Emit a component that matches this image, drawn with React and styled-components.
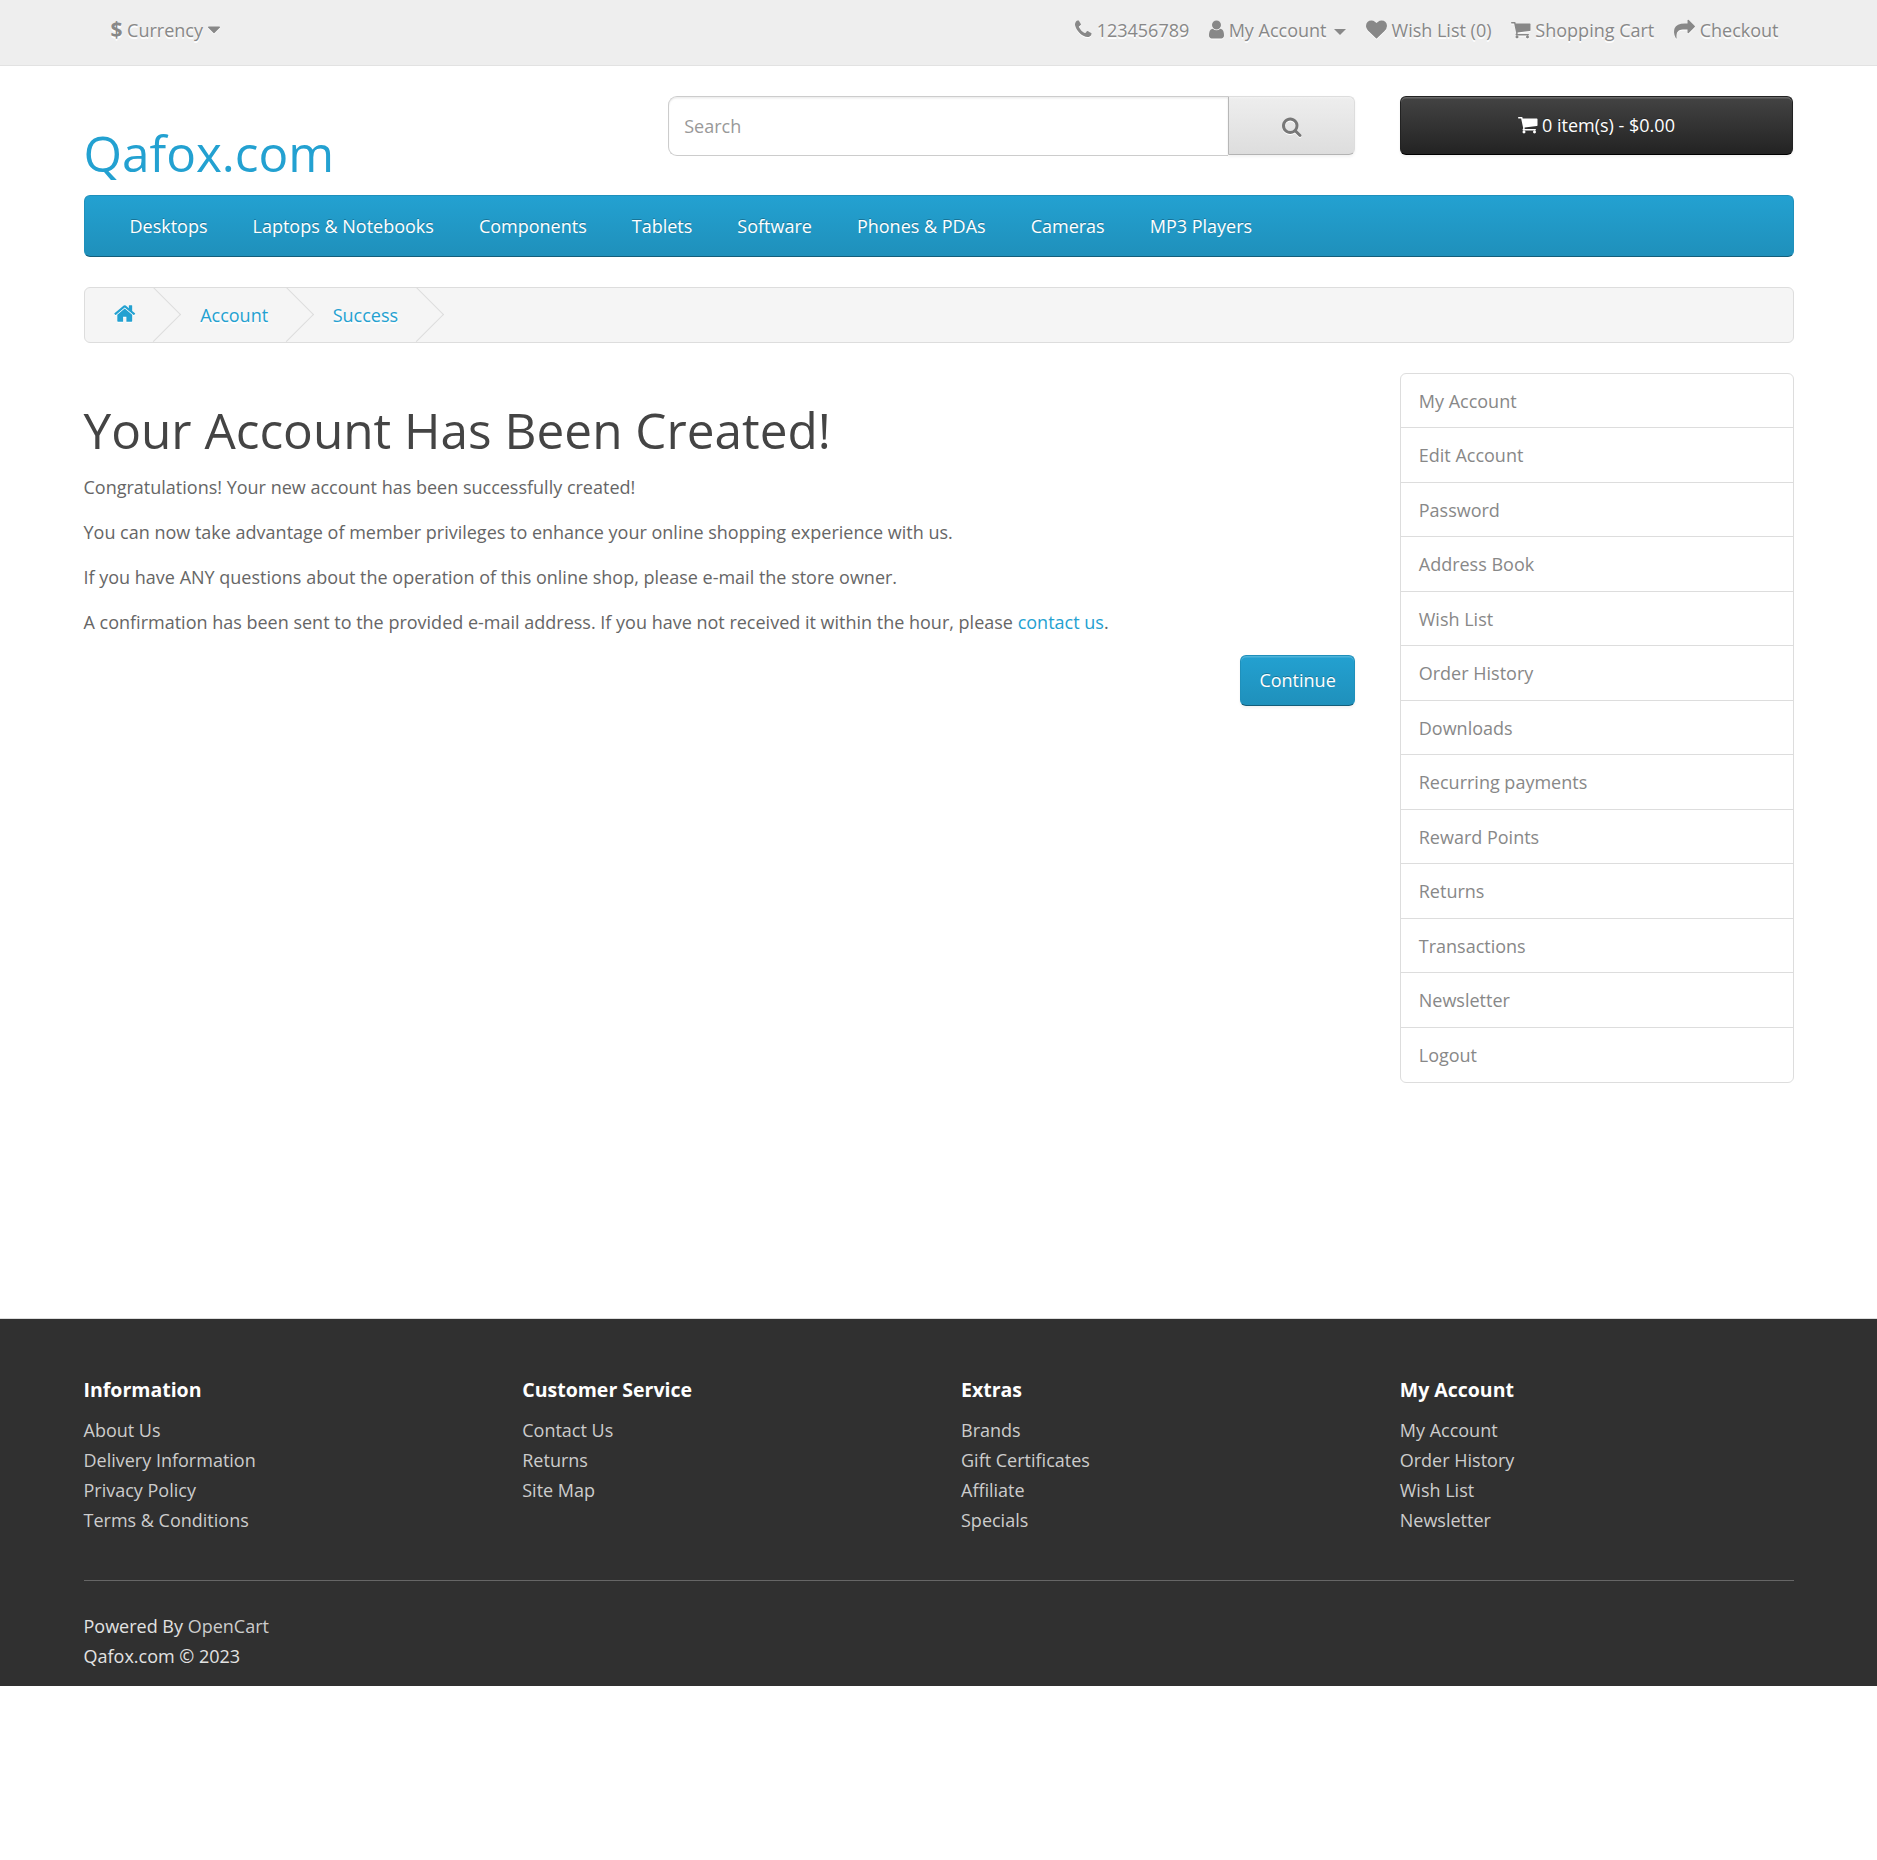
import React from "react";
import styled, { createGlobalStyle } from "styled-components";

const GlobalStyle = createGlobalStyle`
  *, *::before, *::after { box-sizing: border-box; }
  body {
    margin: 0;
    background: #fff;
    color: #666;
    font-family: "Open Sans", sans-serif;
    font-size: 18px;
    line-height: 30px;
  }
  a { color: #23a1d1; text-decoration: none; }
  h1, h5, p, ul { margin: 0; padding: 0; }
  ul { list-style: none; }
  button, input { font-family: inherit; margin: 0; }
`;

const glyphs = {
  phone: [1408, "M1600 1240q0 27-10 70.5t-21 68.5q-21 50-122 106-94 51-186 51-27 0-53-3.5t-57.5-12.5-47-14.5-55.5-20.5-49-18q-98-35-175-83-127-79-264-216t-216-264q-48-77-83-175-3-9-18-49t-20.5-55.5-14.5-47-12.5-57.5-3.5-53q0-92 51-186 56-101 106-122 25-11 68.5-21t70.5-10q14 0 21 3 18 6 53 76 11 19 30 54t35 63.5 31 53.5q3 4 17.5 25t21.5 35.5 7 28.5q0 20-28.5 50t-62 55-62 53-28.5 46q0 9 5 22.5t8.5 20.5 14 24 11.5 19q76 137 174 235t235 174q2 1 19 11.5t24 14 20.5 8.5 22.5 5q18 0 46-28.5t53-62 55-62 50-28.5q14 0 28.5 7t35.5 21.5 25 17.5q25 15 53.5 31t63.5 35 54 30q70 35 76 53 3 7 3 21z"],
  user: [1280, "M1536 1399q0 109-62.5 187t-150.5 78h-854q-88 0-150.5-78t-62.5-187q0-85 8.5-160.5t31.5-152 58.5-131 94-89 134.5-34.5q131 128 313 128t313-128q76 0 134.5 34.5t94 89 58.5 131 31.5 152 8.5 160.5zm-256-887q0 159-112.5 271.5t-271.5 112.5-271.5-112.5-112.5-271.5 112.5-271.5 271.5-112.5 271.5 112.5 112.5 271.5z"],
  heart: [1792, "M896 1664q-26 0-44-18l-624-602q-10-8-27.5-26t-55.5-65.5-68-97.5-53.5-121-23.5-138q0-220 127-344t351-124q62 0 126.5 21.5t120 58 95.5 68.5 76 68q36-36 76-68t95.5-68.5 120-58 126.5-21.5q224 0 351 124t127 344q0 221-229 450l-623 600q-18 18-44 18z"],
  cart: [1664, "M704 1536q0 52-38 90t-90 38-90-38-38-90 38-90 90-38 90 38 38 90zm896 0q0 52-38 90t-90 38-90-38-38-90 38-90 90-38 90 38 38 90zm128-1088v512q0 24-16.5 42.5t-40.5 21.5l-1044 122q13 60 13 70 0 16-24 64h920q26 0 45 19t19 45-19 45-45 19h-1024q-26 0-45-19t-19-45q0-11 8-31.5t16-36 21.5-40 15.5-29.5l-177-823h-204q-26 0-45-19t-19-45 19-45 45-19h256q16 0 28.5 6.5t19.5 15.5 13 24.5 8 26 5.5 29.5 4.5 26h1201q26 0 45 19t19 45z"],
  share: [1792, "M1792 640q0 26-19 45l-512 512q-19 19-45 19t-45-19-19-45v-256h-224q-98 0-175.5 6t-154 21.5-133 42.5-105.5 69.5-80 101-48.5 138.5-17.5 181q0 55 5 123 0 6 2.5 23.5t2.5 26.5q0 15-8.5 25t-23.5 10q-16 0-28-17-7-9-13-22t-13.5-30-10.5-24q-127-285-127-451 0-199 53-333 162-403 875-403h224v-256q0-26 19-45t45-19 45 19l512 512q19 19 19 45z"],
  search: [1664, "M1216 832q0-185-131.5-316.5t-316.5-131.5-316.5 131.5-131.5 316.5 131.5 316.5 316.5 131.5 316.5-131.5 131.5-316.5zm512 832q0 52-38 90t-90 38q-54 0-90-38l-343-342q-179 124-399 124-143 0-273.5-55.5t-225-150-150-225-55.5-273.5 55.5-273.5 150-225 225-150 273.5-55.5 273.5 55.5 225 150 150 225 55.5 273.5q0 220-124 399l343 343q37 37 37 90z"],
  home: [1664, "M1472 992v480q0 26-19 45t-45 19h-384v-384h-256v384h-384q-26 0-45-19t-19-45v-480q0-1 .5-3t.5-3l575-474 575 474q1 2 1 6zm223-69l-62 74q-8 9-21 11h-3q-13 0-21-7l-692-577-692 577q-12 8-24 7-13-2-21-11l-62-74q-8-10-7-23.5t11-21.5l719-599q32-26 76-26t76 26l244 204v-195q0-14 9-23t23-9h192q14 0 23 9t9 23v408l219 182q10 8 11 21.5t-7 23.5z"],
  caret: [1024, "M1408 704q0 26-19 45l-448 448q-19 19-45 19t-45-19l-448-448q-19-19-19-45t19-45 45-19h896q26 0 45 19t19 45z"],
};

const Glyph = styled.svg`
  display: inline-block;
  height: ${(p) => p.$size}px;
  vertical-align: ${(p) => -p.$size / 7}px;
  fill: currentColor;
  overflow: visible;
  filter: ${(p) => (p.$shadow ? `drop-shadow(${p.$shadow})` : "none")};
`;

function Icon({ name, shadow, size = 21 }) {
  const [advance, d] = glyphs[name];
  return (
    <Glyph
      $shadow={shadow}
      $size={size}
      width={(advance / 1792) * size}
      viewBox={`${(1792 - advance) / 2} 0 ${advance} 1792`}
      aria-hidden="true"
    >
      <path d={d} />
    </Glyph>
  );
}

const LIGHT = "0 1.5px 0 #fff";

const Container = styled.div`
  width: 1755px;
  margin: 0 auto;
  padding: 0 22.5px;
`;

const TopBar = styled.nav`
  height: 66px;
  margin-bottom: 30px;
  padding-top: 15px;
  background: #eee;
  border-bottom: 1px solid #e2e2e2;
`;

const TopRow = styled.div`
  display: flex;
  justify-content: space-between;
  padding: 0 15px 0 26.9px;
  color: #888;
  text-shadow: ${LIGHT};
  white-space: nowrap;
`;

const Currency = styled.div`
  strong { font-size: 21px; line-height: 21px; }
`;

const TopLinks = styled.ul`
  display: flex;
  gap: 19.7px;
  a { color: #888; }
`;

const SmallCaret = styled.span`
  display: inline-block;
  margin-left: 3px;
  vertical-align: middle;
  border-top: 6px solid;
  border-right: 6px solid transparent;
  border-left: 6px solid transparent;
`;

const HeaderRow = styled.header`
  display: grid;
  grid-template-columns: 539.75px 686.5px 393.25px;
  column-gap: 45px;
  align-items: start;
`;

const Logo = styled.h1`
  padding: 30px 0 15px;
  font-size: 49.5px;
  font-weight: 400;
  line-height: 54px;
`;

const SearchBox = styled.div`
  display: flex;
  align-items: flex-start;
`;

const SearchInput = styled.input`
  flex: 1;
  min-width: 0;
  height: 60px;
  padding: 0 15px;
  border: 1px solid #ccc;
  border-right: 0;
  border-radius: 9px 0 0 9px;
  background: #fff;
  color: #555;
  font-size: 18px;
  line-height: 30px;
  outline: 0;
  box-shadow: inset 0 1.5px 1.5px rgba(0, 0, 0, 0.075);
  &::placeholder { color: #999; opacity: 1; }
`;

const buttonTones = {
  light: `
    color: #777;
    background: linear-gradient(#eee, #ddd);
    border-color: #ddd #ddd #b3b3b3 #b7b7b7;
  `,
  dark: `
    color: #fff;
    background: linear-gradient(#444, #222);
    border-color: #222 #222 #000;
    text-shadow: 0 -1.5px 0 rgba(0, 0, 0, 0.25);
  `,
  blue: `
    color: #fff;
    background: linear-gradient(#23a1d1, #1f90bb);
    border-color: #1f90bb #1f90bb #145e7a;
    text-shadow: 0 -1.5px 0 rgba(0, 0, 0, 0.25);
  `,
};

const Button = styled.button`
  border: 1px solid;
  border-radius: ${(p) => (p.$joined ? "0 6px 6px 0" : "6px")};
  padding: ${(p) => p.$pad};
  height: ${(p) => p.$height};
  font-size: 18px;
  line-height: 27px;
  box-shadow: inset 0 1.5px 0 rgba(255, 255, 255, 0.2), 0 1.5px 3px rgba(0, 0, 0, 0.05);
  ${(p) => buttonTones[p.$tone]}
  background-clip: border-box;
  background-origin: border-box;
`;

const Menu = styled.nav`
  display: flex;
  height: 62px;
  margin-bottom: 30px;
  padding: 15px 45px;
  gap: 45px;
  border: 1px solid;
  border-color: #1f90bb #1f90bb #145e7a;
  border-radius: 6px;
  background: linear-gradient(#23a1d1, #1f90bb);
  a { color: #fff; text-shadow: 0 -1.5px 0 rgba(0, 0, 0, 0.25); }
`;

const Breadcrumb = styled.ul`
  display: flex;
  gap: 4.6px;
  height: 56px;
  margin-bottom: 30px;
  padding: 12px 0;
  border: 1px solid #ddd;
  border-radius: 6px;
  background: #f5f5f5;
  overflow: hidden;
`;

const Crumb = styled.li`
  position: relative;
  padding: 0 30.4px 0 29.6px;
  text-shadow: ${LIGHT};
  &::after {
    content: "";
    position: absolute;
    top: -5px;
    right: -7.5px;
    width: 39px;
    height: 39px;
    border: solid #ddd;
    border-width: 0 1px 1px 0;
    transform: rotate(-45deg);
    pointer-events: none;
  }
`;

const Columns = styled.div`
  display: grid;
  grid-template-columns: 1271.25px 393.75px;
  column-gap: 45px;
  align-items: start;
`;

const Content = styled.main`
  p { margin-bottom: 15px; }
`;

const Title = styled.h1`
  padding: 30px 0 15px;
  color: #444;
  font-size: 49.5px;
  font-weight: 400;
  line-height: 54px;
`;

const Actions = styled.div`
  display: flex;
  justify-content: flex-end;
  padding-top: 3px;
`;

const SideList = styled.aside`
  height: 710px;
  border: 1px solid #ddd;
  border-radius: 6px;
`;

const SideLink = styled.a`
  display: block;
  height: 53.4px;
  padding: 12px 18px;
  color: #888;
  & + & {
    height: 54.5px;
    padding-top: 11.75px;
    border-top: 1px solid #ddd;
  }
`;

const Footer = styled.footer`
  margin-top: 235px;
  padding-top: 45px;
  background: #303030;
  border-top: 1px solid #ddd;
  color: #e2e2e2;
  a { color: #ccc; }
`;

const FooterColumns = styled.div`
  display: grid;
  grid-template-columns: repeat(4, 1fr);
  column-gap: 45px;
  padding-bottom: 45px;
  border-bottom: 1px solid #666;
`;

const FooterHeading = styled.h5`
  padding: 15px 0;
  color: #fff;
  font-size: 19.5px;
  font-weight: 700;
  line-height: 21px;
`;

const Credit = styled.p`
  padding: 30px 0 15px;
`;

const categories = ["Desktops", "Laptops & Notebooks", "Components", "Tablets", "Software", "Phones & PDAs", "Cameras", "MP3 Players"];

const accountLinks = ["My Account", "Edit Account", "Password", "Address Book", "Wish List", "Order History", "Downloads", "Recurring payments", "Reward Points", "Returns", "Transactions", "Newsletter", "Logout"];

const footerGroups = [
  ["Information", ["About Us", "Delivery Information", "Privacy Policy", "Terms & Conditions"]],
  ["Customer Service", ["Contact Us", "Returns", "Site Map"]],
  ["Extras", ["Brands", "Gift Certificates", "Affiliate", "Specials"]],
  ["My Account", ["My Account", "Order History", "Wish List", "Newsletter"]],
];

export default function App() {
  return (
    <>
      <GlobalStyle />
      <TopBar>
        <Container>
          <TopRow>
            <Currency>
              <strong>$</strong> Currency <Icon name="caret" shadow={LIGHT} />
            </Currency>
            <TopLinks>
              <li><Icon name="phone" shadow={LIGHT} /> 123456789</li>
              <li><a href="#"><Icon name="user" shadow={LIGHT} /> My Account <SmallCaret /></a></li>
              <li><a href="#"><Icon name="heart" shadow={LIGHT} /> Wish List (0)</a></li>
              <li><a href="#"><Icon name="cart" shadow={LIGHT} /> Shopping Cart</a></li>
              <li><a href="#"><Icon name="share" shadow={LIGHT} /> Checkout</a></li>
            </TopLinks>
          </TopRow>
        </Container>
      </TopBar>

      <Container>
        <HeaderRow>
          <Logo><a href="#">Qafox.com</a></Logo>
          <SearchBox>
            <SearchInput placeholder="Search" />
            <Button $tone="light" $joined $pad="4px 52.5px 0" $height="59px" aria-label="Search">
              <Icon name="search" shadow={LIGHT} />
            </Button>
          </SearchBox>
          <Button $tone="dark" $pad="0 15px" $height="59px">
            <Icon name="cart" /> 0 item(s) - $0.00
          </Button>
        </HeaderRow>

        <Menu>
          {categories.map((c) => <a href="#" key={c}>{c}</a>)}
        </Menu>

        <Breadcrumb>
          <Crumb><a href="#"><Icon name="home" size={23.14} shadow={LIGHT} /></a></Crumb>
          <Crumb><a href="#">Account</a></Crumb>
          <Crumb><a href="#">Success</a></Crumb>
        </Breadcrumb>

        <Columns>
          <Content>
            <Title>Your Account Has Been Created!</Title>
            <p>Congratulations! Your new account has been successfully created!</p>
            <p>You can now take advantage of member privileges to enhance your online shopping experience with us.</p>
            <p>If you have ANY questions about the operation of this online shop, please e-mail the store owner.</p>
            <p>
              A confirmation has been sent to the provided e-mail address. If you have not received it within the hour, please <a href="#">contact us</a>.
            </p>
            <Actions>
              <Button $tone="blue" $pad="0 18px" $height="51px">Continue</Button>
            </Actions>
          </Content>
          <SideList>
            {accountLinks.map((l) => <SideLink href="#" key={l}>{l}</SideLink>)}
          </SideList>
        </Columns>
      </Container>

      <Footer>
        <Container>
          <FooterColumns>
            {footerGroups.map(([title, links]) => (
              <section key={title}>
                <FooterHeading>{title}</FooterHeading>
                <ul>
                  {links.map((l) => <li key={l}><a href="#">{l}</a></li>)}
                </ul>
              </section>
            ))}
          </FooterColumns>
          <Credit>
            Powered By <a href="#">OpenCart</a><br />
            Qafox.com © 2023
          </Credit>
        </Container>
      </Footer>
    </>
  );
}
